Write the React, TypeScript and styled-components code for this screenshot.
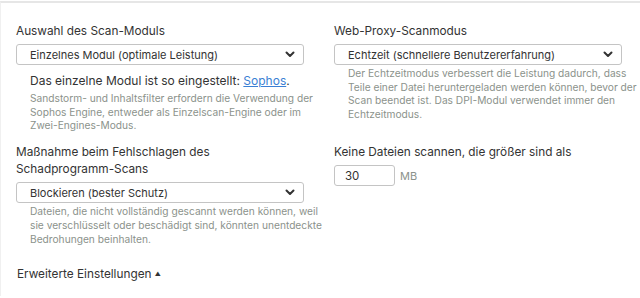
import styled, { createGlobalStyle } from "styled-components";

const GlobalStyle = createGlobalStyle`
  html, body {
    margin: 0;
    padding: 0;
    background: #ffffff;
  }
  body {
    font-family: Inter, "Noto Sans", sans-serif;
    color: #333333;
  }
`;

const Chevron = () => (
  <svg width="10" height="7" viewBox="0 0 10 7">
    <path d="M1.5 1.5 L5 5 L8.5 1.5" fill="none" stroke="#333" strokeWidth="2" strokeLinecap="round" strokeLinejoin="round" />
  </svg>
);

type SelectProps = { value: string };

const Select = ({ value }: SelectProps) => (
  <SelectBox>
    <span>{value}</span>
    <Chevron />
  </SelectBox>
);

const App = () => {
  return (
    <>
      <GlobalStyle />
      <Card>
        <Grid>
          <Field>
            <Label>Auswahl des Scan-Moduls</Label>
            <Select value="Einzelnes Modul (optimale Leistung)" />
            <Note>
              Das einzelne Modul ist so eingestellt: <Link>Sophos</Link>.
            </Note>
            <Help>
              Sandstorm- und Inhaltsfilter erfordern die Verwendung der
              <br />
              Sophos Engine, entweder als Einzelscan-Engine oder im
              <br />
              Zwei-Engines-Modus.
            </Help>
          </Field>
          <Field>
            <Label>Web-Proxy-Scanmodus</Label>
            <Select value="Echtzeit (schnellere Benutzererfahrung)" />
            <Help $tight>
              Der Echtzeitmodus verbessert die Leistung dadurch, dass
              <br />
              Teile einer Datei heruntergeladen werden können, bevor der
              <br />
              Scan beendet ist. Das DPI-Modul verwendet immer den
              <br />
              Echtzeitmodus.
            </Help>
          </Field>
          <Field>
            <Label $narrow>Maßnahme beim Fehlschlagen des Schadprogramm-Scans</Label>
            <Select value="Blockieren (bester Schutz)" />
            <Help $tight>
              Dateien, die nicht vollständig gescannt werden können, weil
              <br />
              sie verschlüsselt oder beschädigt sind, könnten unentdeckte
              <br />
              Bedrohungen beinhalten.
            </Help>
          </Field>
          <Field>
            <Label>Keine Dateien scannen, die größer sind als</Label>
            <SizeRow>
              <NumberBox>30</NumberBox>
              <Unit>MB</Unit>
            </SizeRow>
          </Field>
        </Grid>
        <Advanced>
          Erweiterte Einstellungen <Caret>▲</Caret>
        </Advanced>
      </Card>
    </>
  );
};

const Card = styled.div`
  margin-top: 1px;
  border-top: 2px solid #e6e6e6;
  border-left: 1px solid #f0f0f0;
  height: 295px;
  box-sizing: border-box;
  padding: 20px 0 0 15px;
`;

const Grid = styled.div`
  display: grid;
  grid-template-columns: 318px 300px;
  row-gap: 11px;
`;

const Field = styled.div`
  display: flex;
  flex-direction: column;
  align-items: flex-start;
`;

const Label = styled.div<{ $narrow?: boolean }>`
  font-size: 11.8px;
  line-height: 17px;
  color: #333;
  margin-bottom: 4px;
  max-width: ${(p) => (p.$narrow ? "260px" : "none")};
`;

const SelectBox = styled.div`
  width: 288px;
  height: 21px;
  box-sizing: border-box;
  border: 1px solid #c4c4c4;
  border-radius: 3px;
  display: flex;
  align-items: center;
  justify-content: space-between;
  padding: 0 8px 0 13px;
  font-size: 11px;
  color: #333;
`;

const Note = styled.div`
  margin-top: 8px;
  padding-left: 14px;
  font-size: 12px;
  line-height: 16px;
  color: #333;
`;

const Link = styled.span`
  color: #3b7fd4;
  text-decoration: underline;
`;

const Help = styled.div<{ $tight?: boolean }>`
  margin-top: ${(p) => (p.$tight ? "2px" : "3px")};
  padding-left: 14px;
  font-size: 10.2px;
  line-height: 13.7px;
  color: #8b928b;
  white-space: nowrap;
`;

const SizeRow = styled.div`
  display: flex;
  align-items: center;
  gap: 5px;
`;

const NumberBox = styled.div`
  width: 61px;
  height: 21px;
  box-sizing: border-box;
  border: 1px solid #c4c4c4;
  border-radius: 3px;
  padding-left: 10px;
  display: flex;
  align-items: center;
  font-size: 11.5px;
  color: #333;
`;

const Unit = styled.span`
  font-size: 11px;
  color: #8b928b;
`;

const Advanced = styled.div`
  margin-top: 19px;
  padding-left: 1px;
  font-size: 11.8px;
  line-height: 17px;
  color: #333;
`;

const Caret = styled.span`
  font-size: 6px;
  vertical-align: 2px;
`;

export default App;
